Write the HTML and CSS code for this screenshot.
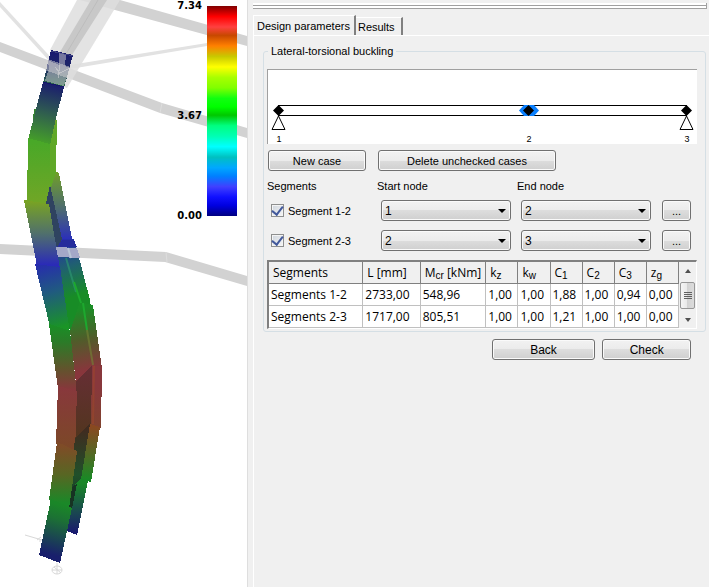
FILE: index.html
```html
<!DOCTYPE html>
<html lang="en">
<head>
<meta charset="utf-8">
<title>Member design</title>
<link rel="stylesheet" href="styles.css">
</head>
<body>
<div class="app">
  <section class="view" aria-label="Model view">
    <svg class="scene" viewBox="0 0 247 587" preserveAspectRatio="xMinYMin slice" aria-hidden="true">
      <defs>
        <linearGradient id="g0" gradientUnits="userSpaceOnUse" x1="0" y1="52" x2="0" y2="86"><stop offset="0" stop-color="#191970"/><stop offset=".4" stop-color="#1c2468"/><stop offset="1" stop-color="#2c6a4a"/></linearGradient>
        <linearGradient id="g1" gradientUnits="userSpaceOnUse" x1="62" y1="84" x2="48" y2="143"><stop offset="0" stop-color="#191970"/><stop offset=".45" stop-color="#2c5355"/><stop offset="1" stop-color="#449c2a"/></linearGradient>
        <linearGradient id="g2" gradientUnits="userSpaceOnUse" x1="0" y1="140" x2="0" y2="202"><stop offset="0" stop-color="#48a828"/><stop offset="1" stop-color="#70a626"/></linearGradient>
        <linearGradient id="g2r" gradientUnits="userSpaceOnUse" x1="0" y1="172" x2="0" y2="240"><stop offset="0" stop-color="#72a028"/><stop offset=".55" stop-color="#4c6a72"/><stop offset="1" stop-color="#2a2ebc"/></linearGradient>
        <linearGradient id="g3" gradientUnits="userSpaceOnUse" x1="0" y1="202" x2="0" y2="265"><stop offset="0" stop-color="#78a224"/><stop offset=".5" stop-color="#50706c"/><stop offset="1" stop-color="#2a2ab8"/></linearGradient>
        <linearGradient id="g4" gradientUnits="userSpaceOnUse" x1="40" y1="264" x2="58" y2="328"><stop offset="0" stop-color="#272cae"/><stop offset=".45" stop-color="#205a80"/><stop offset="1" stop-color="#1a9426"/></linearGradient>
        <linearGradient id="g4r" gradientUnits="userSpaceOnUse" x1="60" y1="240" x2="83" y2="304"><stop offset="0" stop-color="#262cb0"/><stop offset=".4" stop-color="#205f72"/><stop offset=".85" stop-color="#188c26"/></linearGradient>
        <linearGradient id="g5" gradientUnits="userSpaceOnUse" x1="0" y1="326" x2="0" y2="390"><stop offset="0" stop-color="#1a8e26"/><stop offset=".25" stop-color="#2b7b28"/><stop offset=".65" stop-color="#5f562c"/><stop offset="1" stop-color="#88363c"/></linearGradient>
        <linearGradient id="g5r" gradientUnits="userSpaceOnUse" x1="75" y1="310" x2="88" y2="370"><stop offset="0" stop-color="#1a8e26"/><stop offset=".5" stop-color="#505c2a"/><stop offset="1" stop-color="#88363c"/></linearGradient>
        <linearGradient id="g6" gradientUnits="userSpaceOnUse" x1="0" y1="388" x2="0" y2="447"><stop offset="0" stop-color="#88383c"/><stop offset="1" stop-color="#7c4828"/></linearGradient>
        <linearGradient id="g6m" gradientUnits="userSpaceOnUse" x1="0" y1="370" x2="0" y2="435"><stop offset="0" stop-color="#662e34"/><stop offset="1" stop-color="#52351f"/></linearGradient>
        <linearGradient id="g7" gradientUnits="userSpaceOnUse" x1="0" y1="446" x2="0" y2="503"><stop offset="0" stop-color="#7f4c27"/><stop offset=".5" stop-color="#586623"/><stop offset="1" stop-color="#1a8828"/></linearGradient>
        <linearGradient id="g7m" gradientUnits="userSpaceOnUse" x1="0" y1="430" x2="0" y2="505"><stop offset="0" stop-color="#402c20"/><stop offset=".6" stop-color="#20502a"/><stop offset="1" stop-color="#163422"/></linearGradient>
        <linearGradient id="g7r" gradientUnits="userSpaceOnUse" x1="0" y1="426" x2="0" y2="480"><stop offset="0" stop-color="#8a4820"/><stop offset=".5" stop-color="#556724"/><stop offset="1" stop-color="#188a26"/></linearGradient>
        <linearGradient id="g8" gradientUnits="userSpaceOnUse" x1="64" y1="506" x2="49" y2="560"><stop offset="0" stop-color="#1a8628"/><stop offset=".25" stop-color="#1c7134"/><stop offset=".9" stop-color="#191f6c"/></linearGradient>
        <linearGradient id="g8r" gradientUnits="userSpaceOnUse" x1="0" y1="484" x2="0" y2="533"><stop offset="0" stop-color="#1a8628"/><stop offset=".5" stop-color="#1a504a"/><stop offset="1" stop-color="#191970"/></linearGradient>
      </defs>
      <g fill="#e2e2e2">
        <path d="M0 2V7L52 64L56 63Z"/>
        <path d="M70 65L207 43L247 36V40L207 46L70 69Z"/>
      </g>
      <g fill="#d2d2d2">
        <path d="M80 0H120L247 36V46L104 7Z"/>
        <path d="M0 42L162 103L247 128V138L160 113L0 52Z"/>
        <path d="M0 244L166 252L247 276V286L165 262L0 254Z"/>
      </g>
      <path d="M160 113L162 103M166 252L167 262" stroke="#dddddd"/>
      <path d="M50 50L77 0H120L67 88L61 86Z" fill="#dedede" fill-opacity=".85"/>
      <path d="M91 0H107L72 55L60 52Z" fill="#c8c8c8"/>
      <path d="M98 0L66 54" stroke="#bdbdbd" stroke-width="1"/>
      <g shape-rendering="crispEdges">
      <path d="M51 50L73 55L64 88L43 83Z" fill="url(#g0)"/>
      <path d="M59 53L66 54L65 66L70 68L64 86L45 81L49 69L48 60L59 65Z" fill="#d2d2d2" fill-opacity=".5"/>
      <path d="M48 59L70 67L67 78L45 70Z" fill="#d2d2d2" fill-opacity=".5"/>
      <path d="M55 67L60 73M58 78L60 65M70 68L58 74" stroke="#d8d8d8" stroke-opacity=".55"/>
      <path d="M51 51L73 56" stroke="#4b5088" stroke-opacity=".7"/>
      <path d="M34 109H36V122L33 120Z" fill="#348430"/>
      <path d="M56 118V172L59 173L72 239L62 241L49 195L49 144Z" fill="url(#g2r)"/>
      <path d="M57 118L56 173L50 190V144Z" fill="#60a828"/>
      <path d="M43 82L64 87L56 118L50 145L28 140Z" fill="url(#g1)"/>
      <path d="M43 82L64 87" stroke="#15156a"/>
      <path d="M28 138L50 144V206L27 202Z" fill="url(#g2)"/>
      <path d="M60 239H74L76 246L90 300V304H82L70 331L56 267V247Z" fill="url(#g4r)"/>
      <path d="M62 240L74 240L77 247H57Z" fill="#252c9c"/>
      <path d="M46 203L50 185L62 239L57 248Z" fill="#2f4360"/>
      <path d="M24 200L49 204L60 269L37 266Z" fill="url(#g3)"/>
      <path d="M56 247L77 248L80 258L58 257Z" fill="#a4a8c8"/>
      <path d="M35 264L60 267L70 333L50 327Z" fill="url(#g4)"/>
      <path d="M70 331L80 302L93 305L102 368L92 366L76 383Z" fill="url(#g5r)"/>
      <path d="M49 324L70 331L77 393L58 389Z" fill="url(#g5)"/>
      <path d="M76 381L92 365L91 425L75 440Z" fill="url(#g6m)"/>
      <path d="M92 365L102 367L101 428L91 425Z" fill="url(#g6)"/>
      <path d="M58 386L77 391L75 453L56 444Z" fill="url(#g6)"/>
      <path d="M75 438L90 424L82 479L72 508L68 507Z" fill="url(#g7m)"/>
      <path d="M90 424L100 427L91 482L81 479Z" fill="url(#g7r)"/>
      <path d="M72 488L81 478L88 481L77 535L67 531L70 506L76 485Z" fill="url(#g8r)"/>
      <path d="M72 487L77 484L72 508L68 507Z" fill="#173323"/>
      <path d="M57 442L77 451L69 509L49 500Z" fill="url(#g7)"/>
      <path d="M51 499L72 508L60 563L39 555Z" fill="url(#g8)"/>
      </g>
      <g fill="none" stroke-width="2">
        <path d="M66 258L76 292" stroke="#2c9670" stroke-opacity=".65"/>
        <path d="M74 282L81 303M83 303L87 330" stroke="#1da82e"/>
        <path d="M87 330L93 365" stroke="#718034" stroke-opacity=".65"/>
        <path d="M68 248L71 258" stroke="#b9c5d6"/>
        <path d="M94 366L93 424" stroke="#a0482a" stroke-opacity=".5"/>
      </g>
      <g fill="none" stroke="#d8d8d8">
        <ellipse cx="57" cy="570" rx="5" ry="4"/>
        <path d="M52 570H62M57 563V574M54 567L61 573M25 535L42 540M37 540L41 537M39 541L41 541"/>
      </g>
    </svg>
    <div class="scale">
      <div class="scale-values"><span>7.34</span><span class="scale-mid">3.67</span><span>0.00</span></div>
      <div class="scale-bar"></div>
    </div>
  </section>

  <main class="side">
    <div class="grip"></div>
    <div class="tabs" role="tablist">
      <button class="tab tab-active" type="button" role="tab" aria-selected="true">Design parameters</button>
      <button class="tab" type="button" role="tab" aria-selected="false">Results</button>
    </div>
    <form class="page">
      <fieldset class="group">
        <legend>Lateral-torsional buckling</legend>
        <svg class="beam" viewBox="0 0 429 74" role="img" aria-label="Beam with nodes 1, 2 and 3">
          <g fill="none" stroke="#000">
            <path d="M10 35.5H418.500V45.500H10" shape-rendering="crispEdges"/>
            <path d="M10.500 46L4 59.500H17ZM418.500 46L412 59.500H425Z"/>
          </g>
          <path d="M251 40.500L256 35H266L271 40.500L266 46H256Z" fill="#0a80ff"/>
          <path d="M5 40.500L10.500 35L16 40.500L10.500 46ZM255 40.500L260.500 35L266 40.500L260.500 46ZM413 40.500L418.500 35L424 40.500L418.500 46Z"/>
          <g class="node-text" text-anchor="middle"><text x="11" y="72">1</text><text x="261" y="72">2</text><text x="419" y="72">3</text></g>
        </svg>
        <div class="cases">
          <button class="btn" type="button">New case</button>
          <button class="btn" type="button">Delete unchecked cases</button>
        </div>
        <div class="segments">
          <span>Segments</span><span>Start node</span><span>End node</span><span></span>
          <label class="check"><input type="checkbox" checked>Segment 1-2</label>
          <span class="pick"><select aria-label="Start node of segment 1-2"><option>1</option></select></span>
          <span class="pick"><select aria-label="End node of segment 1-2"><option>2</option></select></span>
          <button class="btn more" type="button">...</button>
          <label class="check"><input type="checkbox" checked>Segment 2-3</label>
          <span class="pick"><select aria-label="Start node of segment 2-3"><option>2</option></select></span>
          <span class="pick"><select aria-label="End node of segment 2-3"><option>3</option></select></span>
          <button class="btn more" type="button">...</button>
        </div>
        <div class="results">
          <table>
            <colgroup><col class="c-name"><col class="c-len"><col class="c-mcr"><col span="6"></colgroup>
            <thead><tr><th>Segments</th><th>L [mm]</th><th>M<sub>cr</sub> [kNm]</th><th>k<sub>z</sub></th><th>k<sub>w</sub></th><th>C<sub>1</sub></th><th>C<sub>2</sub></th><th>C<sub>3</sub></th><th>z<sub>g</sub></th></tr></thead>
            <tbody>
              <tr><td>Segments 1-2</td><td>2733,00</td><td>548,96</td><td>1,00</td><td>1,00</td><td>1,88</td><td>1,00</td><td>0,94</td><td>0,00</td></tr>
              <tr><td>Segments 2-3</td><td>1717,00</td><td>805,51</td><td>1,00</td><td>1,00</td><td>1,21</td><td>1,00</td><td>1,00</td><td>0,00</td></tr>
            </tbody>
          </table>
          <div class="scroll">
            <button class="arrow arrow-up" type="button" aria-label="Scroll up"></button>
            <div class="thumb"><i></i><i></i><i></i><i></i></div>
            <button class="arrow arrow-down" type="button" aria-label="Scroll down"></button>
          </div>
        </div>
      </fieldset>
      <div class="actions">
        <button class="btn" type="button">Back</button>
        <button class="btn" type="button">Check</button>
      </div>
    </form>
  </main>
</div>
</body>
</html>
```
FILE: styles.css
```css
* { box-sizing: border-box; }

body {
  margin: 0;
  background: #f0f0f0;
  color: #000;
  font: 11px/14px "Liberation Sans", Arial, sans-serif;
}

button, select { font: inherit; color: inherit; }

.app {
  display: grid;
  grid-template-columns: minmax(0, 248fr) minmax(0, 461fr);
  min-height: 100vh;
}

/* Model view */
.view {
  position: relative;
  overflow: hidden;
  background: #fff;
  border-right: 1px solid #dedede;
}
.scene { position: absolute; inset: 0; width: 100%; height: 100%; }
.scale {
  position: absolute;
  top: 6px;
  right: 10px;
  display: flex;
  gap: 5px;
  height: 210px;
}
.scale-values {
  display: flex;
  flex-direction: column;
  justify-content: space-between;
  margin: -8px 0;
  font: bold 10px/16px "DejaVu Sans", sans-serif;
}
.scale-mid { padding-top: 10px; }
.scale-bar {
  width: 30px;
  background: linear-gradient(#800000, #ff0000 5%, #ff4040 10%, #c84800 14%, #ff8000 19%, #c8c800 24%, #ffff00 29%, #a8ff00 34%, #80ff00 39%, #10ff10 44%, #00ff00 48%, #00c800 52%, #00ff80 57%, #00ffb4 62%, #00ffff 67%, #00c0c0 72%, #00a8ff 77%, #0080ff 81%, #4040ff 86%, #1010ff 91%, #0000e0 95%, #000080);
}

/* Side panel */
.side {
  display: flex;
  flex-direction: column;
  margin-left: 5px;
  padding-top: 3px;
}
.grip {
  height: 6px;
  margin-right: 2px;
  background: linear-gradient(#fff 2px, #a0a0a0 2px, #a0a0a0 3px, #fff 3px, #fff 5px, #a0a0a0 5px);
  border-right: 1px solid #a0a0a0;
}
.tabs {
  display: flex;
  align-items: flex-end;
  height: 26px;
  padding-top: 6px;
}
.tab {
  height: 18px;
  padding: 0 6px 0 2px;
  border: 0;
  border-top: 1px solid #fff;
  border-right: 2px solid #808080;
  background: #f0f0f0;
  white-space: nowrap;
}
.tab-active {
  height: 20px;
  padding: 0 4px 0 3px;
  border-left: 1px solid #fff;
}
.page {
  flex: 1;
  border-top: 1px solid #fff;
  border-left: 1px solid #fff;
  padding: 8px 3px 0 9px;
}
.group {
  margin: 0;
  min-width: 0;
  padding: 11px 8px 2px 3px;
  border: 1px solid #d5dfe5;
  border-radius: 3px;
}
.group legend { margin-left: 1px; padding: 0 3px; }
.beam {
  display: block;
  width: 100%;
  height: auto;
  background: #fff;
  border-top: 1px solid #a0a0a0;
  border-left: 1px solid #a0a0a0;
}
.node-text { font-size: 9px; }
.btn {
  height: 21px;
  padding: 0 4px;
  border: 1px solid #707070;
  border-radius: 3px;
  background: linear-gradient(#f2f2f2, #ebebeb 50%, #dddddd 50%, #cfcfcf);
  box-shadow: inset 0 0 0 1px #fafafa;
}
.cases {
  display: grid;
  grid-template-columns: 98fr 178fr 129fr;
  gap: 12px;
  margin: 6px 0 0 1px;
}
.segments {
  display: grid;
  grid-template-columns: 110fr 140fr 140fr 40fr;
  grid-template-rows: 10px;
  grid-auto-rows: 21px;
  row-gap: 9px;
  align-items: center;
  margin: 10px 0 9px;
}
.check { display: flex; align-items: center; gap: 4px; padding-left: 4px; }
.check input {
  appearance: none;
  display: grid;
  place-items: center;
  width: 13px;
  height: 13px;
  margin: 0;
  border: 1px solid #8e8f8f;
  background: linear-gradient(135deg, #cfd5dd, #f6f6f6);
  box-shadow: inset 0 0 0 1px #f4f4f4;
}
.check input:checked::before {
  content: "";
  width: 5px;
  height: 9px;
  margin-top: -2px;
  border: solid #42599c;
  border-width: 0 2px 2px 0;
  transform: rotate(38deg);
}
.pick { position: relative; margin: 0 6px 0 4px; }
.pick select {
  appearance: none;
  display: block;
  width: 100%;
  height: 21px;
  padding: 0 18px 0 3px;
  border: 1px solid #707070;
  border-radius: 3px;
  background: linear-gradient(#f2f2f2, #ebebeb 50%, #dddddd 50%, #cfcfcf);
  box-shadow: inset 0 0 0 1px #fafafa;
  font-size: 12px;
}
.pick::after {
  content: "";
  position: absolute;
  top: 9px;
  right: 5px;
  border: 4px solid transparent;
  border-top-color: #000;
  border-bottom: 0;
  pointer-events: none;
}
.more { margin: 0 6px 0 5px; }

/* Results table */
.results {
  display: flex;
  border: 1px solid #fff;
  border-top: 2px solid #808080;
  border-left: 2px solid #808080;
}
table {
  flex: 1;
  min-width: 0;
  table-layout: fixed;
  border-collapse: separate;
  border-spacing: 0;
  background: #fff;
  font: 12px/16px "Open Sans", "Noto Sans", sans-serif;
}
.c-name { width: 23%; }
.c-len { width: 14%; }
.c-mcr { width: 16%; }
th, td {
  height: 22px;
  padding: 0 0 0 2px;
  border-right: 1px solid #c0c0c0;
  border-bottom: 1px solid #c0c0c0;
  text-align: left;
  white-space: nowrap;
  font-weight: 400;
}
th {
  padding-left: 4px;
  border-color: #808080;
  background: #f0f0f0;
}
sub { font: 10px/0 "Liberation Sans", Arial, sans-serif; vertical-align: -2px; }
.scroll {
  display: flex;
  flex-direction: column;
  align-items: center;
  justify-content: space-between;
  width: 17px;
  background: #f0f0f0;
}
.arrow {
  width: 16px;
  height: 17px;
  padding: 0;
  border: 0;
  background: none;
  display: grid;
  place-items: center;
}
.arrow::before { content: ""; border: 3px solid transparent; }
.arrow-up::before { border-top: 0; border-bottom: 4px solid #505050; }
.arrow-down::before { border-bottom: 0; border-top: 4px solid #505050; }
.thumb {
  display: flex;
  flex-direction: column;
  align-items: center;
  justify-content: center;
  gap: 1px;
  width: 15px;
  height: 27px;
  border: 1px solid #979797;
  border-radius: 2px;
  background: linear-gradient(90deg, #f5f5f5, #e8e8e8 50%, #d3d3d3 50%, #dcdcdc);
}
.thumb i { width: 8px; height: 1px; background: #606060; }

.actions {
  display: grid;
  grid-template-columns: 103fr 88fr;
  gap: 7px;
  width: 45%;
  margin: 7px 15px 0 auto;
}
.actions .btn { font-size: 12px; }
```
